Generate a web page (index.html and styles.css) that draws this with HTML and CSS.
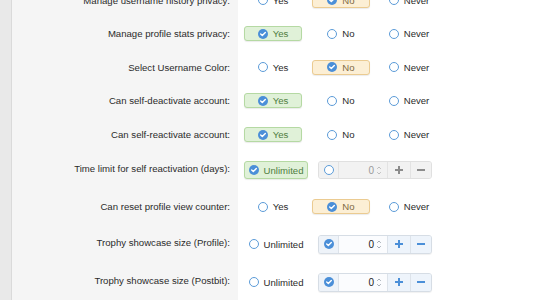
FILE: index.html
```html
<!DOCTYPE html>
<html>
<head>
<meta charset="utf-8">
<link rel="stylesheet" href="styles.css">
</head>
<body>
<div class="page">
  <div class="sidebar"></div>
  <div class="form">
    <div class="rows">
      <div class="row h34">
        <div class="label">Manage username history privacy:</div>
        <div class="controls">
          <span class="opt"><span class="radio"></span>Yes</span>
          <span class="opt sel-no"><svg class="check" viewBox="0 0 10 10"><circle cx="5" cy="5" r="5"/><path d="M2.7 5.1 4.3 6.6 7.3 3.5"/></svg>No</span>
          <span class="opt"><span class="radio"></span>Never</span>
        </div>
      </div>
      <div class="row">
        <div class="label">Manage profile stats privacy:</div>
        <div class="controls">
          <span class="opt sel-yes"><svg class="check" viewBox="0 0 10 10"><circle cx="5" cy="5" r="5"/><path d="M2.7 5.1 4.3 6.6 7.3 3.5"/></svg>Yes</span>
          <span class="opt"><span class="radio"></span>No</span>
          <span class="opt"><span class="radio"></span>Never</span>
        </div>
      </div>
      <div class="row">
        <div class="label">Select Username Color:</div>
        <div class="controls">
          <span class="opt"><span class="radio"></span>Yes</span>
          <span class="opt sel-no"><svg class="check" viewBox="0 0 10 10"><circle cx="5" cy="5" r="5"/><path d="M2.7 5.1 4.3 6.6 7.3 3.5"/></svg>No</span>
          <span class="opt"><span class="radio"></span>Never</span>
        </div>
      </div>
      <div class="row">
        <div class="label">Can self-deactivate account:</div>
        <div class="controls">
          <span class="opt sel-yes"><svg class="check" viewBox="0 0 10 10"><circle cx="5" cy="5" r="5"/><path d="M2.7 5.1 4.3 6.6 7.3 3.5"/></svg>Yes</span>
          <span class="opt"><span class="radio"></span>No</span>
          <span class="opt"><span class="radio"></span>Never</span>
        </div>
      </div>
      <div class="row h345">
        <div class="label">Can self-reactivate account:</div>
        <div class="controls">
          <span class="opt sel-yes"><svg class="check" viewBox="0 0 10 10"><circle cx="5" cy="5" r="5"/><path d="M2.7 5.1 4.3 6.6 7.3 3.5"/></svg>Yes</span>
          <span class="opt"><span class="radio"></span>No</span>
          <span class="opt"><span class="radio"></span>Never</span>
        </div>
      </div>
      <div class="row h36">
        <div class="label lift">Time limit for self reactivation (days):</div>
        <div class="controls">
          <span class="opt wide tall sel-yes"><svg class="check" viewBox="0 0 10 10"><circle cx="5" cy="5" r="5"/><path d="M2.7 5.1 4.3 6.6 7.3 3.5"/></svg>Unlimited</span>
          <div class="spin disabled">
            <span class="cell radio-cell"><span class="radio"></span></span>
            <span class="cell value">0<svg class="arrows" viewBox="0 0 6 11"><path d="M1.2 3.8 3 2 4.8 3.8M1.2 7.2 3 9 4.8 7.2"/></svg></span>
            <span class="cell btn"><svg viewBox="0 0 8 8"><path d="M4 0v8M0 4h8"/></svg></span>
            <span class="cell btn"><svg viewBox="0 0 8 8"><path d="M0 4h8"/></svg></span>
          </div>
        </div>
      </div>
      <div class="row h37">
        <div class="label">Can reset profile view counter:</div>
        <div class="controls">
          <span class="opt"><span class="radio"></span>Yes</span>
          <span class="opt sel-no"><svg class="check" viewBox="0 0 10 10"><circle cx="5" cy="5" r="5"/><path d="M2.7 5.1 4.3 6.6 7.3 3.5"/></svg>No</span>
          <span class="opt"><span class="radio"></span>Never</span>
        </div>
      </div>
      <div class="row h38">
        <div class="label lift">Trophy showcase size (Profile):</div>
        <div class="controls">
          <span class="opt wide tall"><span class="radio"></span>Unlimited</span>
          <div class="spin">
            <span class="cell radio-cell"><svg class="check" viewBox="0 0 10 10"><circle cx="5" cy="5" r="5"/><path d="M2.7 5.1 4.3 6.6 7.3 3.5"/></svg></span>
            <span class="cell value">0<svg class="arrows" viewBox="0 0 6 11"><path d="M1.2 3.8 3 2 4.8 3.8M1.2 7.2 3 9 4.8 7.2"/></svg></span>
            <span class="cell btn"><svg viewBox="0 0 8 8"><path d="M4 0v8M0 4h8"/></svg></span>
            <span class="cell btn"><svg viewBox="0 0 8 8"><path d="M0 4h8"/></svg></span>
          </div>
        </div>
      </div>
      <div class="row h38">
        <div class="label lift">Trophy showcase size (Postbit):</div>
        <div class="controls">
          <span class="opt wide tall"><span class="radio"></span>Unlimited</span>
          <div class="spin">
            <span class="cell radio-cell"><svg class="check" viewBox="0 0 10 10"><circle cx="5" cy="5" r="5"/><path d="M2.7 5.1 4.3 6.6 7.3 3.5"/></svg></span>
            <span class="cell value">0<svg class="arrows" viewBox="0 0 6 11"><path d="M1.2 3.8 3 2 4.8 3.8M1.2 7.2 3 9 4.8 7.2"/></svg></span>
            <span class="cell btn"><svg viewBox="0 0 8 8"><path d="M4 0v8M0 4h8"/></svg></span>
            <span class="cell btn"><svg viewBox="0 0 8 8"><path d="M0 4h8"/></svg></span>
          </div>
        </div>
      </div>
    </div>
  </div>
</div>
</body>
</html>
```

FILE: styles.css
```css
html, body {
  margin: 0;
  padding: 0;
  background: #fff;
}
body {
  font-family: "Liberation Sans", Arial, Helvetica, sans-serif;
  font-size: 9.6px;
  color: #2b2b2b;
  overflow: hidden;
}
.page {
  display: flex;
  height: 300px;
  overflow: hidden;
}
.sidebar {
  width: 11px;
  flex: none;
  background: #e9e9e9;
  border-right: 1px solid #dadada;
}
.form {
  flex: 1;
  background: linear-gradient(to right, #f5f5f5 226px, #ffffff 226px);
}
.rows {
  margin-top: -17px;
}
.row {
  display: flex;
  align-items: center;
  height: 33.5px;
}
.row.h34 { height: 34px; }
.row.h345 { height: 34.5px; }
.row.h36 { height: 36px; }
.row.h37 { height: 37px; }
.row.h38 { height: 38px; }
.label {
  width: 226px;
  flex: none;
  box-sizing: border-box;
  padding-right: 8px;
  text-align: right;
  white-space: nowrap;
}
.label.lift {
  padding-bottom: 4px;
}
.controls {
  display: flex;
  align-items: center;
  gap: 10px;
  padding-left: 6px;
}
.opt {
  box-sizing: border-box;
  width: 58px;
  height: 15px;
  display: flex;
  align-items: center;
  justify-content: center;
  gap: 5px;
  border: 1px solid transparent;
  border-radius: 3px;
  white-space: nowrap;
  color: #2b2b2b;
}
.opt.wide {
  width: 64px;
}
.opt.tall {
  height: 18px;
}
.sel-yes {
  background: #e0f1d8;
  border-color: #b5d9a3;
  box-shadow: 0 1px 1px rgba(0, 0, 0, 0.08);
  color: #4f7d41;
}
.sel-no {
  background: #fcefd5;
  border-color: #ebcb91;
  box-shadow: 0 1px 1px rgba(0, 0, 0, 0.08);
  color: #806a44;
}
.radio {
  box-sizing: border-box;
  width: 10px;
  height: 10px;
  flex: none;
  border: 1.5px solid #5b9bd8;
  border-radius: 50%;
  background: #fff;
}
.check {
  width: 10px;
  height: 10px;
  flex: none;
  display: block;
}
.check circle {
  fill: #4b8fd8;
}
.check path {
  fill: none;
  stroke: #fff;
  stroke-width: 1.4;
  stroke-linecap: round;
  stroke-linejoin: round;
}
.spin {
  box-sizing: border-box;
  display: flex;
  width: 114px;
  height: 19px;
  border: 1px solid #d6dde5;
  border-radius: 3px;
  background: #f6f9fd;
  box-shadow: 0 1px 1px rgba(0, 0, 0, 0.06);
  overflow: hidden;
}
.cell {
  display: flex;
  align-items: center;
  justify-content: center;
  height: 100%;
}
.radio-cell {
  width: 19px;
  border-right: 1px solid #dde3ea;
  background: #eef3f9;
}
.value {
  width: 48px;
  justify-content: flex-end;
  padding-right: 5px;
  box-sizing: border-box;
  gap: 2px;
  background: #fbfcfe;
  color: #222;
  font-size: 10px;
}
.arrows {
  width: 6px;
  height: 11px;
}
.arrows path {
  fill: none;
  stroke: #9aa3ad;
  stroke-width: 0.9;
}
.btn {
  width: 22px;
  border-left: 1px solid #dde3ea;
  background: #eef4fb;
}
.btn:last-child {
  flex: 1;
}
.btn svg {
  width: 8px;
  height: 8px;
}
.btn path {
  fill: none;
  stroke: #4b8fd8;
  stroke-width: 2;
}
.spin.disabled {
  height: 18px;
  background: #f2f2f2;
  border-color: #e0e0e0;
  box-shadow: none;
}
.spin.disabled .radio-cell,
.spin.disabled .value,
.spin.disabled .btn {
  background: #f2f2f2;
  border-color: #e3e3e3;
}
.spin.disabled .value {
  color: #9a9a9a;
}
.spin.disabled .btn path {
  stroke: #8c8c8c;
}
.spin.disabled .arrows path {
  stroke: #b5b5b5;
}
```
